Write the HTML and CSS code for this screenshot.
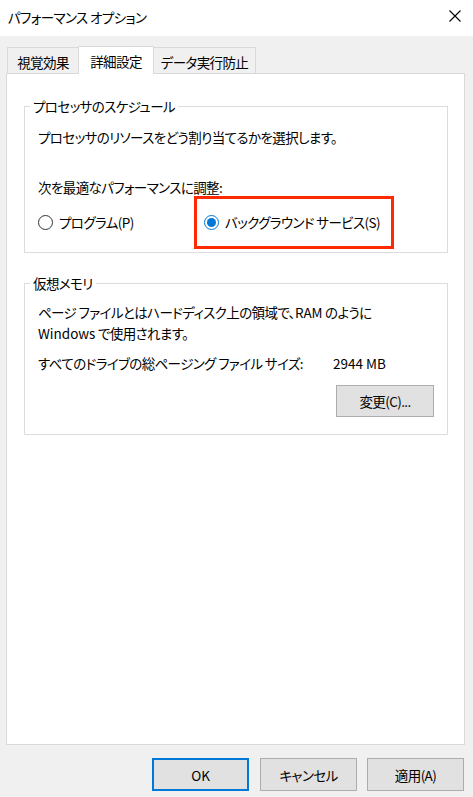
FILE: index.html
```html
<!DOCTYPE html>
<html lang="ja">
<head>
<meta charset="utf-8">
<title>パフォーマンス オプション</title>
<link rel="stylesheet" href="styles.css">
</head>
<body>
<div class="window">
  <div class="titlebar">
    <span class="title">パフォーマンス オプション</span>
    <svg class="close" width="12" height="12" viewBox="0 0 12 12"><path d="M0.5 0.5 L11.5 11.5 M11.5 0.5 L0.5 11.5" stroke="#000" stroke-width="1.1" fill="none"/></svg>
  </div>
  <div class="content">
    <div class="tabs">
      <div class="tab t1">視覚効果</div>
      <div class="tab active t2">詳細設定</div>
      <div class="tab t3">データ実行防止</div>
    </div>
    <div class="panel">
      <fieldset class="group g1">
        <legend>プロセッサのスケジュール</legend>
        <p class="line l1">プロセッサのリソースをどう割り当てるかを選択します。</p>
        <p class="line l2">次を最適なパフォーマンスに調整:</p>
        <div class="radios">
          <label class="opt o1"><span class="radio"></span><span>プログラム(P)</span></label>
          <label class="opt o2"><span class="radio checked"></span><span>バックグラウンド サービス(S)</span></label>
        </div>
      </fieldset>
      <fieldset class="group g2">
        <legend>仮想メモリ</legend>
        <p class="line m1">ページ ファイルとはハードディスク上の領域で、<span class="en">RAM</span> のように<br><span class="en">Windows</span> で使用されます。</p>
        <div class="sizerow"><span class="sizelabel">すべてのドライブの総ページング ファイル サイズ:</span><span class="en">2944 MB</span></div>
        <div class="btnrow"><button class="btn change">変更(C)...</button></div>
      </fieldset>
    </div>
    <div class="footer">
      <button class="btn fbtn ok"><span class="en">OK</span></button>
      <button class="btn fbtn">キャンセル</button>
      <button class="btn fbtn">適用(A)</button>
    </div>
  </div>
</div>
</body>
</html>
```
FILE: styles.css
```css
html, body {
  margin: 0;
  padding: 0;
}
body {
  width: 473px;
  height: 797px;
  font-family: "Noto Sans CJK JP", "Noto Sans", sans-serif;
  font-size: 13.5px;
  letter-spacing: -0.6px;
  font-feature-settings: "palt";
  color: #000;
  overflow: hidden;
}
.en {
  letter-spacing: 0;
}
.window {
  width: 473px;
  height: 797px;
  display: flex;
  flex-direction: column;
}
.titlebar {
  height: 36px;
  background: #fff;
  display: flex;
  align-items: center;
  justify-content: space-between;
  padding: 0 12px 0 8px;
  box-sizing: border-box;
}
.title {
  font-size: 13.5px;
  line-height: 20px;
  margin-top: -2px;
}
.close {
  margin-top: -4px;
}
.content {
  flex: 1;
  background: #f0f0f0;
  padding: 10px 8px 0 6px;
  display: flex;
  flex-direction: column;
}
.tabs {
  display: flex;
  height: 27px;
  padding-left: 1px;
  align-items: flex-end;
  position: relative;
  z-index: 1;
}
.tab {
  box-sizing: border-box;
  height: 26px;
  border: 1px solid #d9d9d9;
  border-bottom: none;
  background: #f0f0f0;
  display: flex;
  align-items: center;
  justify-content: center;
  line-height: 20px;
  padding-top: 2px;
}
.t1 { width: 71px; border-right: none; }
.t2 {
  width: 76px;
  height: 28px;
  margin-bottom: -1px;
  background: #fff;
  padding-top: 0;
}
.t3 { width: 102px; border-left: none; }
.panel {
  box-sizing: border-box;
  height: 672px;
  background: #fff;
  border: 1px solid #d9d9d9;
  padding: 22px 16px 0 17px;
}
.group {
  margin: 0;
  border: 1px solid #dcdcdc;
  padding: 0 13px 0 13px;
  min-width: 0;
}
.group legend {
  padding: 0 3px;
  margin-left: -8px;
  line-height: 20px;
}
.line {
  margin: 0;
  line-height: 21px;
}
.l1 { margin-top: 11px; }
.l2 { margin-top: 29px; }
.radios {
  display: flex;
  align-items: center;
  height: 24px;
  margin-top: 12px;
  margin-bottom: 18px;
}
.opt {
  display: flex;
  align-items: center;
  gap: 6px;
  line-height: 20px;
}
.o1 { width: 166px; }
.o2 { position: relative; }
.o2::after {
  content: "";
  position: absolute;
  left: -10px;
  right: -14px;
  top: -16px;
  bottom: -17px;
  border: 3px solid #ff2a00;
}
.radio {
  box-sizing: border-box;
  width: 15px;
  height: 15px;
  border-radius: 50%;
  border: 1px solid #333;
  background: #fff;
  display: flex;
  align-items: center;
  justify-content: center;
}
.radio.checked {
  border-color: #0078d7;
}
.radio.checked::before {
  content: "";
  width: 9px;
  height: 9px;
  border-radius: 50%;
  background: #0078d7;
}
.g2 {
  margin-top: 20px;
}
.m1 { margin-top: 9px; }
.sizerow {
  display: flex;
  line-height: 21px;
  margin-top: 9px;
}
.sizelabel {
  width: 295px;
}
.btnrow {
  display: flex;
  justify-content: flex-end;
  margin-top: 11px;
  margin-bottom: 17px;
}
.btn {
  font-family: inherit;
  font-size: 13.5px;
  letter-spacing: -0.6px;
  font-feature-settings: "palt";
  color: #000;
  background: #e1e1e1;
  border: 1px solid #adadad;
  padding: 0;
  box-sizing: border-box;
  line-height: 20px;
}
.change {
  width: 98px;
  height: 32px;
}
.footer {
  display: flex;
  justify-content: flex-end;
  gap: 10px;
  margin-top: 13px;
  padding-right: 1px;
}
.fbtn {
  width: 97px;
  height: 33px;
}
.ok {
  border: 2px solid #0078d7;
  margin-right: 1px;
}
```
